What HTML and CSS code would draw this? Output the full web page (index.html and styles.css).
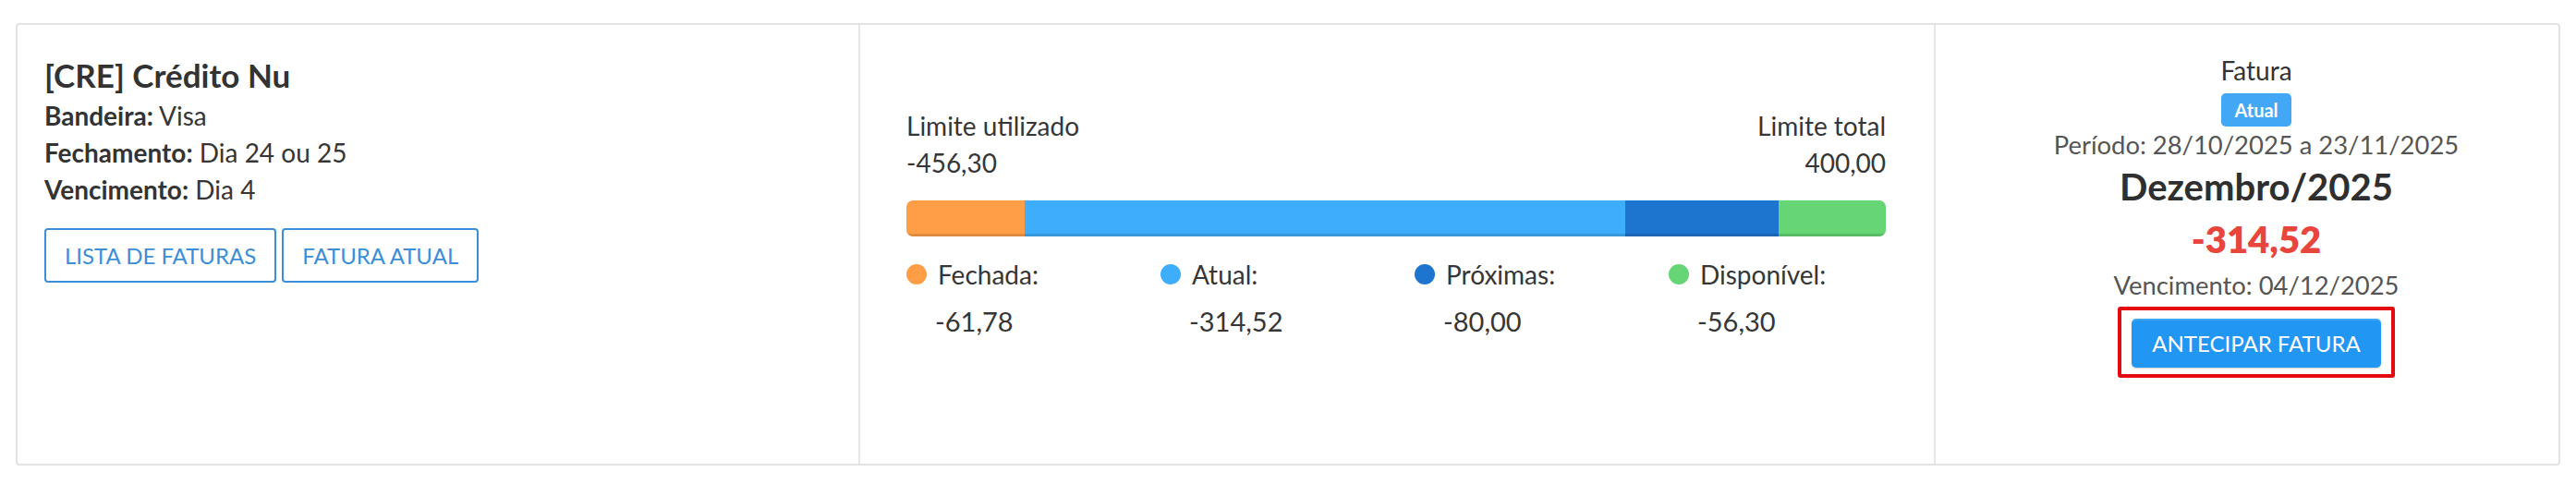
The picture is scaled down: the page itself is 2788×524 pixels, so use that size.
FILE: index.html
```html
<!DOCTYPE html>
<html lang="pt-BR">
<head>
<meta charset="utf-8">
<title>Cartão</title>
<link rel="stylesheet" href="styles.css">
</head>
<body>
<div class="page">
  <div class="card">
    <div class="col col-info">
      <h1 class="title">[CRE] Crédito Nu</h1>
      <div class="info-line"><b>Bandeira:</b> Visa</div>
      <div class="info-line"><b>Fechamento:</b> Dia 24 ou 25</div>
      <div class="info-line"><b>Vencimento:</b> Dia 4</div>
      <div class="btn-row">
        <button class="btn-outline">LISTA DE FATURAS</button>
        <button class="btn-outline">FATURA ATUAL</button>
      </div>
    </div>
    <div class="col col-limit">
      <div class="limit-head">
        <div class="limit-side">
          <div class="limit-label">Limite utilizado</div>
          <div class="limit-value">-456,30</div>
        </div>
        <div class="limit-side right">
          <div class="limit-label">Limite total</div>
          <div class="limit-value">400,00</div>
        </div>
      </div>
      <div class="bar">
        <div class="seg orange" style="width: 12.05%"></div>
        <div class="seg light" style="width: 61.36%"></div>
        <div class="seg dark" style="width: 15.61%"></div>
        <div class="seg green" style="width: 10.98%"></div>
      </div>
      <div class="legend">
        <div class="leg">
          <div class="leg-label"><span class="dot orange"></span>Fechada:</div>
          <div class="leg-value">-61,78</div>
        </div>
        <div class="leg">
          <div class="leg-label"><span class="dot light"></span>Atual:</div>
          <div class="leg-value">-314,52</div>
        </div>
        <div class="leg">
          <div class="leg-label"><span class="dot dark"></span>Próximas:</div>
          <div class="leg-value">-80,00</div>
        </div>
        <div class="leg">
          <div class="leg-label"><span class="dot green"></span>Disponível:</div>
          <div class="leg-value">-56,30</div>
        </div>
      </div>
    </div>
    <div class="col col-fatura">
      <div class="fat-title">Fatura</div>
      <span class="badge">Atual</span>
      <div class="fat-gray fat-period">Período: 28/10/2025 a 23/11/2025</div>
      <div class="fat-month">Dezembro/2025</div>
      <div class="fat-amount">-314,52</div>
      <div class="fat-gray fat-due">Vencimento: 04/12/2025</div>
      <div class="highlight">
        <button class="btn-primary">ANTECIPAR FATURA</button>
      </div>
    </div>
  </div>
</div>
</body>
</html>
```

FILE: styles.css
```css
* { box-sizing: border-box; }

body {
  margin: 0;
  background: #ffffff;
  font-family: Lato, "Open Sans", sans-serif;
  color: #363636;
  font-size: 28px;
  line-height: 40px;
}

.page {
  padding: 25px 0 0 17px;
}

.card {
  width: 2754px;
  height: 479px;
  border: 2px solid #e2e2e2;
  border-radius: 4px;
  display: flex;
}

.col {
  height: 100%;
}

/* left column */
.col-info {
  width: 912px;
  border-right: 2px solid #e6e6e6;
  padding: 32px 29px 0 29px;
}

.title {
  margin: 0 0 2px 0;
  font-size: 35px;
  line-height: 44px;
  font-weight: 700;
  color: #333;
}

.info-line b {
  font-weight: 700;
  color: #333;
}

.btn-row {
  display: flex;
  gap: 6px;
  margin-top: 22px;
}

.btn-outline {
  height: 59px;
  padding: 0 20px;
  background: #fff;
  border: 2px solid #3b8fd8;
  border-radius: 4px;
  color: #3b8fd8;
  font-family: Lato, sans-serif;
  font-size: 24px;
  line-height: 1;
}

/* middle column */
.col-limit {
  width: 1164px;
  border-right: 2px solid #e6e6e6;
  padding: 89px 52px 0 50px;
}

.limit-head {
  display: flex;
  justify-content: space-between;
}

.limit-side.right {
  text-align: right;
}

.bar {
  margin-top: 21px;
  height: 39px;
  display: flex;
  border-radius: 7px;
  overflow: hidden;
}

.seg {
  height: 100%;
  box-shadow: inset 0 -3px 0 rgba(0, 0, 0, 0.12);
}

.orange { background: #ff9e47; }
.light { background: #3eaefc; }
.dark { background: #1e75cf; }
.green { background: #65d575; }

.legend {
  display: grid;
  grid-template-columns: repeat(4, 275px);
  margin-top: 21px;
}

.leg-label {
  display: flex;
  align-items: center;
}

.dot {
  width: 22px;
  height: 22px;
  border-radius: 50%;
  margin-right: 12px;
  flex: none;
}

.leg-value {
  margin-top: 11px;
  padding-left: 31px;
  font-size: 29px;
}

/* right column */
.col-fatura {
  flex: 1;
  padding: 29px 0 0 20px;
  display: flex;
  flex-direction: column;
  align-items: center;
  text-align: center;
}

.fat-title {
  color: #333;
}

.badge {
  margin-top: 5px;
  height: 36px;
  padding: 0 14px;
  background: #42a7f5;
  color: #fff;
  border-radius: 5px;
  font-weight: 700;
  font-size: 20px;
  line-height: 36px;
}

.fat-gray {
  color: #555;
  font-size: 27.4px;
}

.fat-month {
  margin-top: 1px;
  font-size: 40px;
  line-height: 48px;
  font-weight: 700;
  color: #2f2f2f;
}

.fat-amount {
  margin-top: 9px;
  font-size: 40px;
  line-height: 48px;
  font-weight: 800;
  color: #e8453c;
}

.fat-due {
  margin-top: 6px;
}

.highlight {
  margin-top: 3px;
  border: 4px solid #e30b10;
  border-radius: 3px;
  padding: 9px 11px 7px 11px;
}

.btn-primary {
  display: block;
  width: 270px;
  height: 53px;
  border: none;
  border-radius: 5px;
  background: #2196f3;
  color: #fff;
  font-family: Lato, sans-serif;
  font-size: 24px;
  line-height: 1;
  box-shadow: inset 0 2px 0 rgba(255, 255, 255, 0.15), 0 1px 2px rgba(0, 0, 0, 0.2);
}
```
